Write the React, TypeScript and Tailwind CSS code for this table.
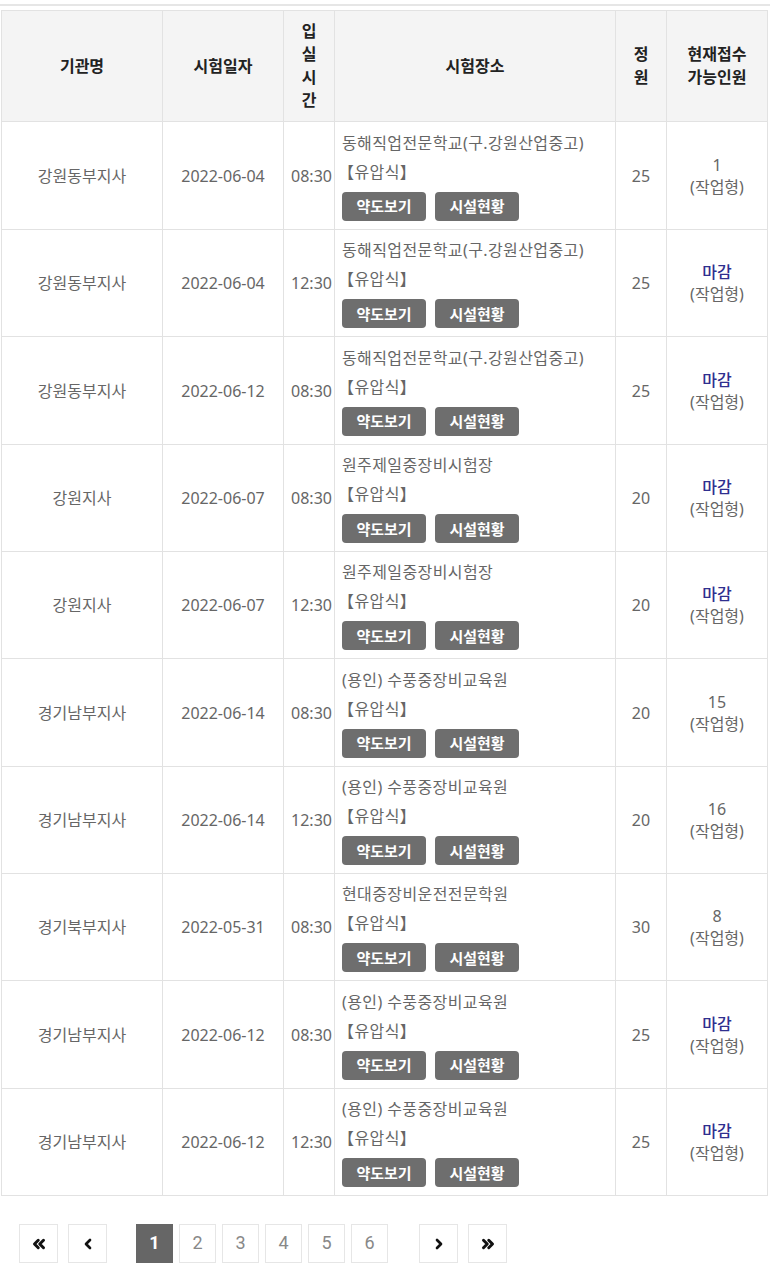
import { ChevronLeft, ChevronRight, ChevronsLeft, ChevronsRight } from 'lucide-react'

interface ExamRow {
  office: string
  date: string
  time: string
  place: string
  quota: number
  remain: string
  tall?: boolean
}

const rows: ExamRow[] = [
  { office: '강원동부지사', date: '2022-06-04', time: '08:30', place: '동해직업전문학교(구.강원산업중고)', quota: 25, remain: '1', tall: true },
  { office: '강원동부지사', date: '2022-06-04', time: '12:30', place: '동해직업전문학교(구.강원산업중고)', quota: 25, remain: '마감' },
  { office: '강원동부지사', date: '2022-06-12', time: '08:30', place: '동해직업전문학교(구.강원산업중고)', quota: 25, remain: '마감', tall: true },
  { office: '강원지사', date: '2022-06-07', time: '08:30', place: '원주제일중장비시험장', quota: 20, remain: '마감' },
  { office: '강원지사', date: '2022-06-07', time: '12:30', place: '원주제일중장비시험장', quota: 20, remain: '마감' },
  { office: '경기남부지사', date: '2022-06-14', time: '08:30', place: '(용인) 수풍중장비교육원', quota: 20, remain: '15', tall: true },
  { office: '경기남부지사', date: '2022-06-14', time: '12:30', place: '(용인) 수풍중장비교육원', quota: 20, remain: '16' },
  { office: '경기북부지사', date: '2022-05-31', time: '08:30', place: '현대중장비운전전문학원', quota: 30, remain: '8' },
  { office: '경기남부지사', date: '2022-06-12', time: '08:30', place: '(용인) 수풍중장비교육원', quota: 25, remain: '마감', tall: true },
  { office: '경기남부지사', date: '2022-06-12', time: '12:30', place: '(용인) 수풍중장비교육원', quota: 25, remain: '마감' },
]

const th = 'border border-[#e2e2e2] bg-[#f4f4f4] py-[9px] text-center align-middle text-[16px] font-bold leading-[23px] text-[#222]'
const td = 'border border-[#e2e2e2] text-center align-middle text-[16px] leading-[22px] text-[#666]'

function GrayButton({ label }: { label: string }) {
  return (
    <span className="inline-flex h-[29px] w-[84px] items-center justify-center rounded-[4px] bg-[#6e6e6e] text-[15px] font-bold text-white">
      {label}
    </span>
  )
}

function PageBox({ children, active, wide }: { children: React.ReactNode; active?: boolean; wide?: boolean }) {
  return (
    <span
      className={
        'flex h-[39px] items-center justify-center border pb-[3px] text-[18px] ' +
        (wide ? 'w-[39px] ' : 'w-[37px] ') +
        (active ? 'border-[#666] bg-[#666] font-bold text-white' : 'border-[#e6e6e6] bg-white text-[#888]')
      }
    >
      {children}
    </span>
  )
}

export default function App() {
  return (
    <div className="min-h-[1274px] w-[773px] bg-white pt-[4px] font-['Noto_Sans','Noto_Sans_CJK_KR',sans-serif]">
      <div className="h-[2px] w-[770px] bg-[#e6e6e6]" />
      <div className="mt-[4px] pl-[1px]">
        <table className="w-[766px] table-fixed border-collapse">
          <colgroup>
            <col className="w-[161px]" />
            <col className="w-[121px]" />
            <col className="w-[51px]" />
            <col className="w-[281px]" />
            <col className="w-[51px]" />
            <col className="w-[101px]" />
          </colgroup>
          <thead>
            <tr>
              <th className={th}>기관명</th>
              <th className={th}>시험일자</th>
              <th className={th}>
                입<br />실<br />시<br />간
              </th>
              <th className={th}>시험장소</th>
              <th className={th}>
                정<br />원
              </th>
              <th className={th}>
                현재접수
                <br />
                가능인원
              </th>
            </tr>
          </thead>
          <tbody>
            {rows.map((r, i) => (
              <tr key={i} className={r.tall ? 'h-[108px]' : 'h-[107px]'}>
                <td className={td}>{r.office}</td>
                <td className={td}>{r.date}</td>
                <td className={td + ' pl-[5px] pr-0'}>{r.time}</td>
                <td className={td + ' px-[7px] pt-[6px] pb-[8px] text-left'}>
                  <div className="leading-[29px] tracking-[0.4px]">{r.place}</div>
                  <div className="-ml-[4px] leading-[29px] tracking-[0.4px]">【유압식】</div>
                  <div className="mt-[5px] flex gap-[9px]">
                    <GrayButton label="약도보기" />
                    <GrayButton label="시설현황" />
                  </div>
                </td>
                <td className={td}>{r.quota}</td>
                <td className={td}>
                  <div className={r.remain === '마감' ? 'font-medium text-[#2f2f8f]' : ''}>{r.remain}</div>
                  <div>(작업형)</div>
                </td>
              </tr>
            ))}
          </tbody>
        </table>
      </div>

      <div className="mt-[28px] flex items-center pl-[19px] font-['Roboto','Noto_Sans',sans-serif]">
        <PageBox wide>
          <ChevronsLeft size={18} strokeWidth={4} className="mt-[3px] text-[#111]" />
        </PageBox>
        <span className="ml-[10px]">
          <PageBox wide>
            <ChevronLeft size={16} strokeWidth={4} className="mt-[3px] text-[#111]" />
          </PageBox>
        </span>
        <div className="ml-[29px] flex gap-[6px]">
          <PageBox active>1</PageBox>
          <PageBox>2</PageBox>
          <PageBox>3</PageBox>
          <PageBox>4</PageBox>
          <PageBox>5</PageBox>
          <PageBox>6</PageBox>
        </div>
        <span className="ml-[31px]">
          <PageBox wide>
            <ChevronRight size={16} strokeWidth={4} className="mt-[3px] text-[#111]" />
          </PageBox>
        </span>
        <span className="ml-[10px]">
          <PageBox wide>
            <ChevronsRight size={18} strokeWidth={4} className="mt-[3px] text-[#111]" />
          </PageBox>
        </span>
      </div>
    </div>
  )
}
